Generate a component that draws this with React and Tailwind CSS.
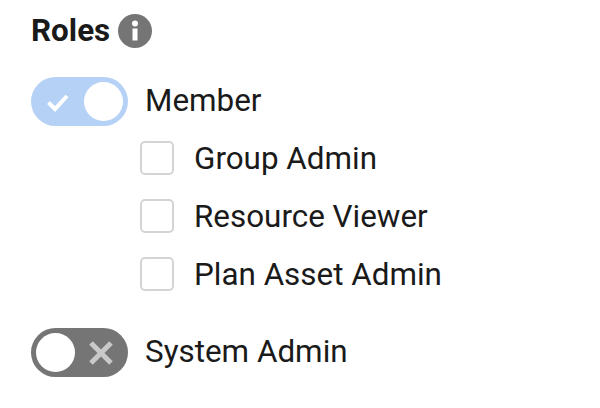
import React from 'react';

const Switch = ({ on }) => (
  <div
    className={`w-[97px] h-[49px] rounded-full flex items-center justify-between px-[5px] ${
      on ? 'bg-[#b5d2f6]' : 'bg-[#757575]'
    }`}
  >
    {on ? (
      <>
        <svg width="26" height="26" viewBox="0 0 26 26" className="ml-[9px]">
          <path d="M3.5 13.5 L10 20 L22 7" fill="none" stroke="#fff" strokeWidth="4" />
        </svg>
        <div className="w-[39px] h-[39px] rounded-full bg-white" />
      </>
    ) : (
      <>
        <div className="w-[39px] h-[39px] rounded-full bg-white" />
        <svg width="26" height="26" viewBox="0 0 26 26" className="mr-[9px]">
          <path d="M3 3 L23 23 M23 3 L3 23" fill="none" stroke="#c9c9c9" strokeWidth="5" />
        </svg>
      </>
    )}
  </div>
);

const Check = ({ label }) => (
  <div className="flex items-center gap-[20px] h-[34px]">
    <div className="w-[34px] h-[34px] rounded-[5px] border-2 border-[#d4d4d4] bg-white" />
    <span className="text-[31.4px] text-[#1a1a1a]">{label}</span>
  </div>
);

export default function App() {
  return (
    <div className="w-[600px] h-[408px] bg-white overflow-hidden pl-[31px] pt-[13px] font-['Roboto',sans-serif]">
      <div className="flex items-center gap-[8px] h-[36px]">
        <span className="text-[31.4px] font-bold text-[#1a1a1a]">Roles</span>
        <svg width="34" height="34" viewBox="0 0 34 34">
          <circle cx="17" cy="17" r="17" fill="#757575" />
          <circle cx="17" cy="9.5" r="3" fill="#fff" />
          <rect x="14.5" y="14.5" width="5" height="12" fill="#fff" />
        </svg>
      </div>
      <div className="flex items-center gap-[17px] mt-[28px]">
        <Switch on />
        <span className="text-[31.4px] text-[#1a1a1a] pb-[2px]">Member</span>
      </div>
      <div className="flex flex-col gap-[24px] mt-[15px] ml-[109px]">
        <Check label="Group Admin" />
        <Check label="Resource Viewer" />
        <Check label="Plan Asset Admin" />
      </div>
      <div className="flex items-center gap-[17px] mt-[37px]">
        <Switch />
        <span className="text-[31.4px] text-[#1a1a1a] pb-[2px]">System Admin</span>
      </div>
    </div>
  );
}
